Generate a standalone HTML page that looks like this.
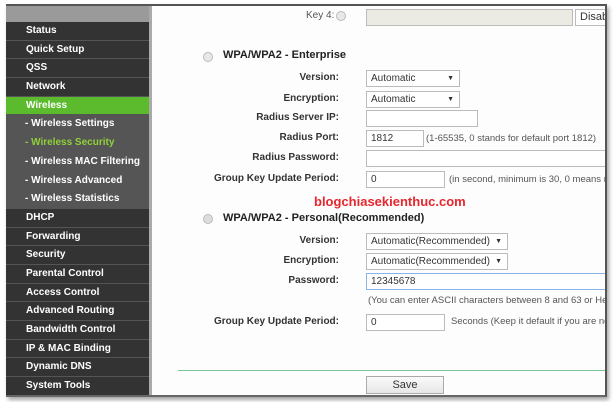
<!DOCTYPE html>
<html><head><meta charset="utf-8"><style>
*{margin:0;padding:0;box-sizing:border-box}
body{width:614px;height:402px;background:#fff;position:relative;overflow:hidden;font-family:"Liberation Sans",Arial,sans-serif}
#frame{position:absolute;left:6px;top:4px;width:601px;height:393px;border-top:2px solid #555;border-right:2px solid #555;border-bottom:2px solid #666;box-shadow:2px 3px 4px rgba(0,0,0,.35);background:#fdfdfd;overflow:hidden}
#side{position:absolute;left:0;top:0;width:143px;height:392px;background:#4a4a4a}
#side .top{height:16px;background:#9a9a9a}
#side div.i{height:18.7px;line-height:18px;color:#fff;font-weight:bold;font-size:10px;padding-left:20px;background:#333;border-bottom:1px solid #555}
#side div.s{background:#555;padding-left:19px}
#side div.g{background:#5bbb2d}
#side div.y{color:#8fd13a}
#vl{position:absolute;left:143px;top:0;width:3px;height:392px;background:#aaa}
.a{position:absolute;font-size:10px;color:#333;white-space:nowrap}
.l{position:absolute;right:266px;font-size:10px;font-weight:bold;color:#333;white-space:nowrap}
.in{position:absolute;left:360px;height:17px;border:1px solid #bbb;background:#fff;font-size:10px;color:#333;padding-left:4px;line-height:15px}
.sel::after{content:"▼";position:absolute;right:5px;font-size:7px;top:0}
.h{position:absolute;left:217px;font-size:11px;font-weight:bold;color:#222}
.r{position:absolute;left:197px;width:10px;height:10px;border-radius:50%;border:1px solid #bbb;background:#e8e8e8}
.n{position:absolute;font-size:9.5px;color:#555;white-space:nowrap}
</style></head><body>
<div id="frame">
<div id="side"><div class="top"></div>
<div class="i">Status</div><div class="i">Quick Setup</div><div class="i">QSS</div><div class="i">Network</div><div class="i g">Wireless</div>
<div class="i s">- Wireless Settings</div><div class="i s y">- Wireless Security</div><div class="i s">- Wireless MAC Filtering</div><div class="i s">- Wireless Advanced</div><div class="i s">- Wireless Statistics</div>
<div class="i">DHCP</div><div class="i">Forwarding</div><div class="i">Security</div><div class="i">Parental Control</div><div class="i">Access Control</div><div class="i">Advanced Routing</div><div class="i">Bandwidth Control</div><div class="i">IP &amp; MAC Binding</div><div class="i">Dynamic DNS</div><div class="i">System Tools</div>
</div>
<div id="vl"></div>
<div class="a" style="left:300px;top:4px;color:#555">Key 4:</div>
<div class="r" style="left:330px;top:5px"></div>
<div class="in" style="top:3px;width:207px;background:#ebebe4"></div>
<div class="in" style="left:569px;top:3px;width:40px;font-size:11px">Disabl</div>

<div class="r" style="top:46px"></div><div class="h" style="top:43px">WPA/WPA2 - Enterprise</div>
<div class="l" style="top:66px">Version:</div><div class="in sel" style="top:64px;width:94px">Automatic</div>
<div class="l" style="top:87px">Encryption:</div><div class="in sel" style="top:85px;width:94px">Automatic</div>
<div class="l" style="top:106px">Radius Server IP:</div><div class="in" style="top:104px;width:112px"></div>
<div class="l" style="top:126px">Radius Port:</div><div class="in" style="top:124px;width:58px">1812</div><div class="n" style="left:420px;top:127px">(1-65535, 0 stands for default port 1812)</div>
<div class="l" style="top:146px">Radius Password:</div><div class="in" style="top:144px;width:250px"></div>
<div class="l" style="top:167px">Group Key Update Period:</div><div class="in" style="top:165px;width:79px">0</div><div class="n" style="left:443px;top:168px">(in second, minimum is 30, 0 means n</div>
<div class="a" style="left:308px;top:188px;color:#e8262e;font-size:13px;font-weight:bold">blogchiasekienthuc.com</div>

<div class="r" style="top:208px;background:#ddd"></div><div class="h" style="top:206px">WPA/WPA2 - Personal(Recommended)</div>
<div class="l" style="top:229px">Version:</div><div class="in sel" style="top:227px;width:142px">Automatic(Recommended)</div>
<div class="l" style="top:249px">Encryption:</div><div class="in sel" style="top:247px;width:142px">Automatic(Recommended)</div>
<div class="l" style="top:269px">Password:</div><div class="in" style="top:267px;width:250px;border-color:#8ab4e8">12345678</div>
<div class="n" style="left:362px;top:289px">(You can enter ASCII characters between 8 and 63 or He</div>
<div class="l" style="top:310px">Group Key Update Period:</div><div class="in" style="top:308px;width:79px">0</div><div class="n" style="left:445px;top:310px">Seconds (Keep it default if you are no</div>
<div style="position:absolute;left:172px;top:364px;width:430px;height:1px;background:#7cc79a"></div>
<div style="position:absolute;left:360px;top:370px;width:78px;height:18px;border:1px solid #aaa;background:linear-gradient(#fafafa,#e6e6e6);font-size:11px;text-align:center;line-height:16px;color:#333">Save</div>
</div>
</body></html>
